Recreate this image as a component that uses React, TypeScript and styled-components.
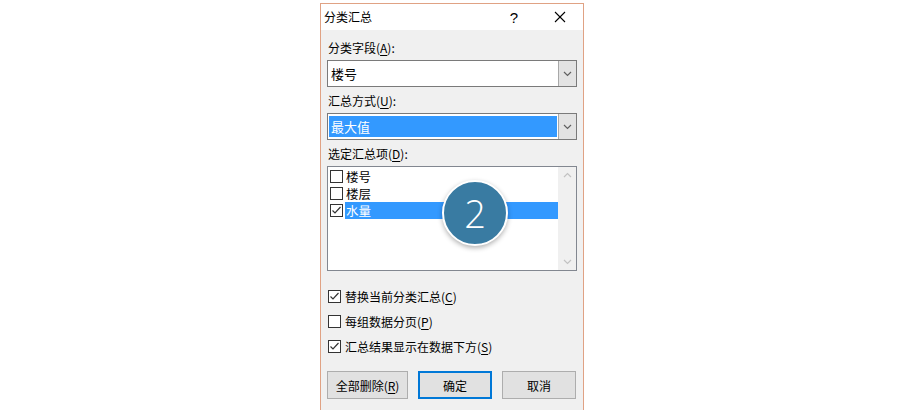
import styled, { createGlobalStyle } from "styled-components";

const GlobalStyle = createGlobalStyle`
  html, body {
    margin: 0;
    padding: 0;
    background: #ffffff;
    height: 410px;
    overflow: hidden;
  }
  body {
    font-family: "Noto Sans CJK SC", "Noto Sans", sans-serif;
    font-size: 12px;
    color: #000;
  }
`;

const Page = styled.div`
  display: flex;
  justify-content: flex-start;
  padding: 3px 0 0 320px;
`;

const Dialog = styled.div`
  width: 262px;
  height: 406px;
  border: 1px solid #e0a284;
  border-bottom: none;
  background: #f0f0f0;
  display: flex;
  flex-direction: column;
  overflow: hidden;
`;

const TitleBar = styled.div`
  height: 26px;
  background: #ffffff;
  display: flex;
  align-items: center;
`;

const Title = styled.div`
  flex: 1;
  padding-left: 3px;
  font-size: 12px;
  line-height: 16px;
`;

const TitleButton = styled.div<{ $w: number }>`
  width: ${(p) => p.$w}px;
  height: 26px;
  display: flex;
  align-items: center;
  justify-content: center;
  font-family: "Liberation Sans", sans-serif;
  font-size: 15px;
`;

const Body = styled.div`
  padding: 10px 6px 0 6px;
  display: flex;
  flex-direction: column;
`;

const Label = styled.div<{ $top?: number }>`
  line-height: 16px;
  height: 16px;
  margin-top: ${(p) => p.$top ?? 0}px;
  margin-bottom: 4px;
  padding-left: 1px;
  & u {
    text-decoration: underline;
    text-underline-offset: 2px;
  }
`;

const Combo = styled.div`
  height: 27px;
  box-sizing: border-box;
  border: 1px solid #7a7a7a;
  background: #ffffff;
  display: flex;
`;

const ComboText = styled.div<{ $selected?: boolean }>`
  flex: 1;
  margin: 2px 1px 2px 1px;
  padding-left: 2px;
  display: flex;
  align-items: center;
  font-size: 13px;
  line-height: 17px;
  background: ${(p) => (p.$selected ? "#3399ff" : "transparent")};
  color: ${(p) => (p.$selected ? "#ffffff" : "#000000")};
`;

const DropButton = styled.div`
  width: 17px;
  background: #e3e3e3;
  border-left: 1px solid #a8a8a8;
  display: flex;
  align-items: center;
  justify-content: center;
`;

const ListBox = styled.div`
  position: relative;
  height: 105px;
  box-sizing: border-box;
  border: 1px solid #828790;
  background: #ffffff;
  display: flex;
`;

const Items = styled.div`
  flex: 1;
  padding-top: 1px;
  display: flex;
  flex-direction: column;
`;

const Item = styled.div`
  height: 17px;
  display: flex;
  align-items: center;
  padding-left: 2px;
  font-size: 12.5px;
  line-height: 15px;
`;

const ItemText = styled.div<{ $selected?: boolean }>`
  flex: 1;
  height: 17px;
  display: flex;
  align-items: center;
  padding-left: 1px;
  background: ${(p) => (p.$selected ? "#3399ff" : "transparent")};
  color: ${(p) => (p.$selected ? "#ffffff" : "#000000")};
`;

const Box = styled.div<{ $gap?: number }>`
  width: 13px;
  height: 13px;
  box-sizing: border-box;
  border: 1px solid #333333;
  background: #ffffff;
  display: flex;
  align-items: center;
  justify-content: center;
  margin-right: ${(p) => p.$gap ?? 2}px;
  flex-shrink: 0;
`;

const ScrollBar = styled.div`
  width: 18px;
  background: #f0f0f0;
  display: flex;
  flex-direction: column;
  justify-content: space-between;
  align-items: center;
  padding: 5px 0;
`;

const Badge = styled.div`
  position: absolute;
  left: 114px;
  top: 13px;
  width: 62px;
  height: 62px;
  border-radius: 50%;
  background: #397ba2;
  border: 2px solid #ffffff;
  box-shadow: 0 2px 5px rgba(0, 0, 0, 0.3);
  display: flex;
  align-items: center;
  justify-content: center;
  color: #ffffff;
  font-family: "Open Sans", "Liberation Sans", sans-serif;
  font-weight: 300;
  font-size: 38px;
`;

const Options = styled.div`
  margin-top: 17px;
  display: flex;
  flex-direction: column;
  gap: 9px;
`;

const Option = styled.div`
  height: 16px;
  display: flex;
  align-items: center;
  padding-left: 1px;
  & u {
    text-decoration: underline;
    text-underline-offset: 2px;
  }
`;

const Buttons = styled.div`
  margin-top: 17px;
  display: flex;
  gap: 10px;
`;

const Button = styled.div<{ $w: number; $default?: boolean }>`
  width: ${(p) => p.$w}px;
  height: 28px;
  box-sizing: border-box;
  background: #e1e1e1;
  border: ${(p) => (p.$default ? "2px solid #0078d7" : "1px solid #adadad")};
  display: flex;
  align-items: center;
  justify-content: center;
  & u {
    text-decoration: underline;
    text-underline-offset: 2px;
  }
`;

const Chevron = ({ up, color = "#606060" }: { up?: boolean; color?: string }) => (
  <svg width="9" height="6" viewBox="0 0 9 6">
    <polyline
      points={up ? "1,5 4.5,1.5 8,5" : "1,1 4.5,4.5 8,1"}
      fill="none"
      stroke={color}
      strokeWidth="1.2"
    />
  </svg>
);

const Check = () => (
  <svg width="11" height="11" viewBox="0 0 11 11">
    <polyline points="1.5,5.5 4,8 9.5,2" fill="none" stroke="#333" strokeWidth="1.2" />
  </svg>
);

const CheckBox = ({ checked, gap }: { checked?: boolean; gap?: number }) => (
  <Box $gap={gap}>{checked && <Check />}</Box>
);

export default function App() {
  return (
    <>
      <GlobalStyle />
      <Page>
        <Dialog>
          <TitleBar>
            <Title>分类汇总</Title>
            <TitleButton $w={46}>?</TitleButton>
            <TitleButton $w={46}>
              <svg width="12" height="12" viewBox="0 0 12 12">
                <line x1="1" y1="1" x2="11" y2="11" stroke="#000" strokeWidth="1.1" />
                <line x1="11" y1="1" x2="1" y2="11" stroke="#000" strokeWidth="1.1" />
              </svg>
            </TitleButton>
          </TitleBar>
          <Body>
            <Label>
              分类字段(<u>A</u>):
            </Label>
            <Combo>
              <ComboText>楼号</ComboText>
              <DropButton>
                <Chevron />
              </DropButton>
            </Combo>

            <Label $top={6}>
              汇总方式(<u>U</u>):
            </Label>
            <Combo>
              <ComboText $selected>最大值</ComboText>
              <DropButton>
                <Chevron />
              </DropButton>
            </Combo>

            <Label $top={6}>
              选定汇总项(<u>D</u>):
            </Label>
            <ListBox>
              <Items>
                <Item>
                  <CheckBox />
                  <ItemText>楼号</ItemText>
                </Item>
                <Item>
                  <CheckBox />
                  <ItemText>楼层</ItemText>
                </Item>
                <Item>
                  <CheckBox checked />
                  <ItemText $selected>水量</ItemText>
                </Item>
              </Items>
              <ScrollBar>
                <Chevron up color="#c2c2c2" />
                <Chevron color="#c2c2c2" />
              </ScrollBar>
              <Badge>2</Badge>
            </ListBox>

            <Options>
              <Option>
                <CheckBox checked gap={4} />
                替换当前分类汇总(<u>C</u>)
              </Option>
              <Option>
                <CheckBox gap={4} />
                每组数据分页(<u>P</u>)
              </Option>
              <Option>
                <CheckBox checked gap={4} />
                汇总结果显示在数据下方(<u>S</u>)
              </Option>
            </Options>

            <Buttons>
              <Button $w={81}>
                全部删除(<u>R</u>)
              </Button>
              <Button $w={74} $default>
                确定
              </Button>
              <Button $w={74}>取消</Button>
            </Buttons>
          </Body>
        </Dialog>
      </Page>
    </>
  );
}
